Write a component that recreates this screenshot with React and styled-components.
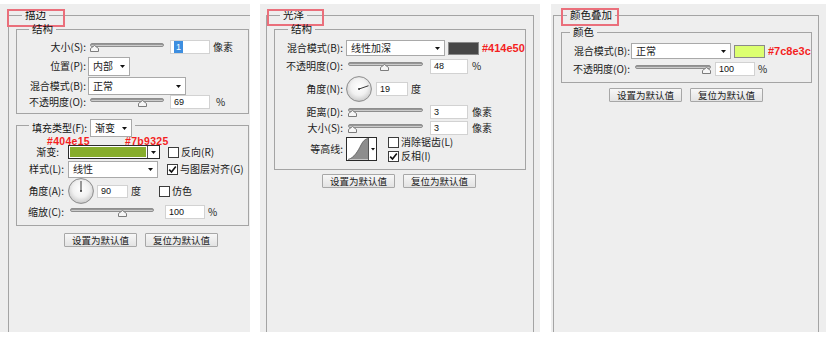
import React from "react";
import styled, { createGlobalStyle } from "styled-components";

const Global = createGlobalStyle`
  html, body { margin: 0; padding: 0; background: #ffffff; }
  body { font-family: "Noto Sans CJK SC", "Noto Sans", sans-serif; color: #1c1c1c; }
  * { box-sizing: border-box; }
`;

const Page = styled.div`
  display: flex;
  align-items: flex-start;
  width: 826px;
  height: 338px;
  padding-top: 4px;
  overflow: hidden;
`;

const Panel = styled.section`
  flex: none;
  display: flex;
  flex-direction: column;
  width: ${(p) => p.$w}px;
  height: 328px;
  margin-left: ${(p) => p.$ml}px;
  padding: 4px 0 0 ${(p) => p.$pl}px;
  background: #eeeeee;
  overflow: hidden;
`;

const Group = styled.fieldset`
  flex: 1;
  flex-shrink: 0;
  width: ${(p) => p.$w}px;
  min-width: 0;
  margin: 0;
  padding: 0;
  border: 1px solid #a4a4a4;
  border-bottom: none;
`;

const SubGroup = styled.fieldset`
  width: ${(p) => p.$w}px;
  min-width: 0;
  margin: ${(p) => p.$mt || 0}px 0 0 7px;
  padding: ${(p) => p.$pt}px 0 ${(p) => p.$pb}px 0;
  border: 1px solid #a4a4a4;
`;

const Legend = styled.legend`
  position: relative;
  display: flex;
  align-items: center;
  margin-left: ${(p) => p.$ml}px;
  padding: ${(p) => p.$pt || 0}px 3px 0;
  font-size: ${(p) => p.$fs || 10.5}px;
  line-height: 14px;
  color: #111;
  ${(p) =>
    p.$mark !== undefined &&
    `&::after {
      content: "";
      position: absolute;
      left: ${p.$mark}px;
      top: ${p.$markTop}px;
      width: ${p.$markW}px;
      height: ${p.$markH}px;
      border: 2px solid #ea6f7b;
    }`}
`;

const Row = styled.div`
  display: flex;
  align-items: center;
  height: ${(p) => p.$h}px;
  flex: none;
`;

const Label = styled.span`
  flex: none;
  width: ${(p) => p.$w}px;
  text-align: right;
  font-size: 10px;
  line-height: 12px;
  white-space: nowrap;
  color: #1a1a1a;
`;

const Unit = styled.span`
  flex: none;
  margin-left: ${(p) => p.$ml || 0}px;
  font-size: 10px;
  line-height: 12px;
  white-space: nowrap;
`;

const SliderBox = styled.div`
  position: relative;
  flex: none;
  width: ${(p) => p.$w}px;
  height: 10px;
  margin-left: ${(p) => p.$ml || 0}px;
`;

const Track = styled.div`
  position: absolute;
  left: 0;
  right: 0;
  top: 1px;
  height: 4px;
  border-radius: 2px;
  border: 1px solid #8e8e8e;
  background: linear-gradient(#7a7a7a, #b9b9b9 55%, #e4e4e4);
`;

const ThumbSvg = styled.svg`
  position: absolute;
  top: 3px;
  left: ${(p) => p.$x}px;
`;

const Slider = ({ $w, $ml, $pos }) => (
  <SliderBox $w={$w} $ml={$ml}>
    <Track />
    <ThumbSvg $x={$pos} width="9" height="7" viewBox="0 0 9 7">
      <polygon points="0.5,6.5 0.5,3.5 4.5,0.5 8.5,3.5 8.5,6.5" fill="#f6f6f6" stroke="#7c7c7c" />
    </ThumbSvg>
  </SliderBox>
);

const Field = styled.div`
  flex: none;
  display: flex;
  align-items: center;
  width: ${(p) => p.$w}px;
  height: ${(p) => p.$h || 14}px;
  margin-left: ${(p) => p.$ml || 0}px;
  padding-left: 3px;
  background: #ffffff;
  border: 1px solid #d2d2d2;
  font-family: "Liberation Sans", Arial, sans-serif;
  font-size: 9px;
  color: #111;
`;

const Sel = styled.span`
  display: inline-block;
  height: 12px;
  line-height: 12px;
  padding: 0 2px;
  background: #3d8ee0;
  color: #ffffff;
`;

const SelectBox = styled.div`
  flex: none;
  display: flex;
  align-items: center;
  justify-content: space-between;
  width: ${(p) => p.$w}px;
  height: ${(p) => p.$h}px;
  margin-left: ${(p) => p.$ml || 0}px;
  padding: 0 4px 0 4px;
  background: #ffffff;
  border: 1px solid #a9a9a9;
  font-size: 10px;
  line-height: 12px;
  white-space: nowrap;
`;

const Arrow = () => (
  <svg width="5" height="3" viewBox="0 0 5 3">
    <polygon points="0,0 5,0 2.5,3" fill="#111" />
  </svg>
);

const Select = ({ children, ...rest }) => (
  <SelectBox {...rest}>
    <span>{children}</span>
    <Arrow />
  </SelectBox>
);

const Swatch = styled.div`
  flex: none;
  width: 31px;
  height: 13px;
  margin-left: ${(p) => p.$ml || 0}px;
  background: ${(p) => p.$c};
  border: 1px solid #8a8a8a;
`;

const Note = styled.span`
  flex: none;
  margin-left: ${(p) => p.$ml || 0}px;
  width: ${(p) => (p.$w ? `${p.$w}px` : "auto")};
  font-family: "Liberation Sans", Arial, sans-serif;
  font-weight: 700;
  font-size: ${(p) => p.$fs || 11}px;
  letter-spacing: ${(p) => p.$ls || 0}px;
  line-height: ${(p) => p.$lh || 12}px;
  color: #f41f1f;
  white-space: nowrap;
`;

const GradientBox = styled.div`
  flex: none;
  display: flex;
  width: 92px;
  height: 14px;
  margin-left: ${(p) => p.$ml || 0}px;
  border: 1px solid #2b2b2b;
  background: #ffffff;
`;

const GradientFill = styled.div`
  flex: 1;
  margin: 1px;
  background: #87ad2c;
`;

const DropPart = styled.div`
  flex: none;
  display: flex;
  align-items: center;
  justify-content: center;
  width: 12px;
  border-left: 1px solid #555;
`;

const CheckItem = styled.span`
  flex: none;
  display: flex;
  align-items: center;
  gap: 2px;
  margin-left: ${(p) => p.$ml || 0}px;
  font-size: 10px;
  line-height: 12px;
  white-space: nowrap;
`;

const Box = styled.span`
  flex: none;
  display: flex;
  align-items: center;
  justify-content: center;
  width: 11px;
  height: 11px;
  background: #ffffff;
  border: 1px solid #3c3c3c;
`;

const Check = ({ on, children, ...rest }) => (
  <CheckItem {...rest}>
    <Box>
      {on && (
        <svg width="9" height="9" viewBox="0 0 9 9">
          <polyline points="1.2,4.6 3.5,7 7.8,1.5" fill="none" stroke="#111" strokeWidth="1.6" />
        </svg>
      )}
    </Box>
    {children}
  </CheckItem>
);

const CheckStack = styled.div`
  flex: none;
  display: flex;
  flex-direction: column;
  gap: 2px;
  margin-left: ${(p) => p.$ml || 0}px;
`;

const DialSvg = styled.svg`
  flex: none;
  margin-left: ${(p) => p.$ml || 0}px;
`;

const Dial = ({ angle, id, $ml }) => {
  const r = (angle * Math.PI) / 180;
  const x2 = 13 + Math.cos(r) * 10;
  const y2 = 13 - Math.sin(r) * 10;
  return (
    <DialSvg $ml={$ml} width="26" height="26" viewBox="0 0 26 26">
      <defs>
        <radialGradient id={id} cx="50%" cy="42%" r="60%">
          <stop offset="0%" stopColor="#ffffff" />
          <stop offset="55%" stopColor="#f1f1f1" />
          <stop offset="100%" stopColor="#c6c6c6" />
        </radialGradient>
      </defs>
      <circle cx="13" cy="13" r="12.4" fill={`url(#${id})`} stroke="#8c8c8c" strokeWidth="1" />
      <line x1="13" y1="13" x2={x2} y2={y2} stroke="#3a3a3a" strokeWidth="1" />
      <circle cx="13" cy="13" r="1" fill="#333" />
    </DialSvg>
  );
};

const ContourSvg = styled.svg`
  flex: none;
  margin-left: ${(p) => p.$ml || 0}px;
`;

const Contour = ({ $ml }) => (
  <ContourSvg $ml={$ml} width="31" height="24" viewBox="0 0 31 24">
    <rect x="0.5" y="0.5" width="30" height="23" fill="#ffffff" stroke="#2a2a2a" />
    <path d="M2,22.5 C8,21 12,14 15,8 C17,4 19,2 22,1.5 L22,22.5 Z" fill="#8d8d8d" />
    <path d="M2,22.5 C8,21 12,14 15,8 C17,4 19,2 22,1.5" fill="none" stroke="#5a5a5a" strokeWidth="0.8" />
    <line x1="22.5" y1="1" x2="22.5" y2="23" stroke="#555" />
    <polygon points="25,11 29,11 27,13.5" fill="#111" />
  </ContourSvg>
);

const Buttons = styled.div`
  display: flex;
  gap: 8px;
  margin: ${(p) => p.$mt}px 0 0 55px;
`;

const Button = styled.button`
  flex: none;
  width: 73px;
  height: 14px;
  padding: 0;
  border: 1px solid #a7a7a7;
  border-radius: 1px;
  background: linear-gradient(#f7f7f7, #e3e3e3);
  font-family: "Noto Sans CJK SC", sans-serif;
  font-size: 9.5px;
  line-height: 12px;
  color: #1a1a1a;
`;

const DefaultButtons = ({ $mt }) => (
  <Buttons $mt={$mt}>
    <Button>设置为默认值</Button>
    <Button>复位为默认值</Button>
  </Buttons>
);

export default function App() {
  return (
    <>
      <Global />
      <Page>
        <Panel $w={250} $ml={0} $pl={8}>
          <Group $w={250}>
            <Legend $ml={13} $mark={-15} $markTop={1} $markW={54} $markH={14}>描边</Legend>
            <SubGroup $w={233} $pt={2} $pb={5}>
              <Legend $ml={12}>结构</Legend>
              <Row $h={18}>
                <Label $w={69}>大小(S):</Label>
                <Slider $ml={4} $w={74} $pos={0} />
                <Field $ml={6} $w={40}><Sel>1</Sel></Field>
                <Unit $ml={3}>像素</Unit>
              </Row>
              <Row $h={20}>
                <Label $w={69}>位置(P):</Label>
                <Select $ml={2} $w={42} $h={19}>内部</Select>
              </Row>
              <Row $h={20}>
                <Label $w={69}>混合模式(B):</Label>
                <Select $ml={2} $w={98} $h={18}>正常</Select>
              </Row>
              <Row $h={12}>
                <Label $w={69}>不透明度(O):</Label>
                <Slider $ml={4} $w={74} $pos={48} />
                <Field $ml={6} $w={40}>69</Field>
                <Unit $ml={6}>%</Unit>
              </Row>
            </SubGroup>
            <SubGroup $w={233} $pt={1} $pb={5}>
              <Legend $ml={12} $pt={5} $fs={10}>
                填充类型(F):
                <Select $ml={3} $w={42} $h={18}>渐变</Select>
              </Legend>
              <Row $h={6}>
                <Note $ml={30} $w={78} $lh={6} $fs={10.5} $ls={0.3}>#404e15</Note>
                <Note $lh={6} $fs={10.5} $ls={0.3}>#7b9325</Note>
              </Row>
              <Row $h={16}>
                <Label $w={42}>渐变:</Label>
                <GradientBox $ml={9}>
                  <GradientFill />
                  <DropPart><Arrow /></DropPart>
                </GradientBox>
                <Check $ml={8}>反向(R)</Check>
              </Row>
              <Row $h={18}>
                <Label $w={47}>样式(L):</Label>
                <Select $ml={4} $w={90} $h={17}>线性</Select>
                <Check $ml={9} on>与图层对齐(G)</Check>
              </Row>
              <Row $h={26}>
                <Label $w={47}>角度(A):</Label>
                <Dial $ml={4} angle={90} id="dialA" />
                <Field $ml={3} $w={31} $h={13}>90</Field>
                <Unit $ml={3}>度</Unit>
                <Check $ml={18}>仿色</Check>
              </Row>
              <Row $h={16}>
                <Label $w={47}>缩放(C):</Label>
                <Slider $ml={6} $w={84} $pos={48} />
                <Field $ml={11} $w={40}>100</Field>
                <Unit $ml={3}>%</Unit>
              </Row>
            </SubGroup>
            <DefaultButtons $mt={7} />
          </Group>
        </Panel>

        <Panel $w={280} $ml={10} $pl={6}>
          <Group $w={268}>
            <Legend $ml={13} $mark={-13} $markTop={1} $markW={53} $markH={13}>光泽</Legend>
            <SubGroup $w={252} $pt={3} $pb={6}>
              <Legend $ml={13}>结构</Legend>
              <Row $h={18}>
                <Label $w={68}>混合模式(B):</Label>
                <Select $ml={3} $w={99} $h={16}>线性加深</Select>
                <Swatch $ml={3} $c="#474747" />
                <Note $ml={3}>#414e50</Note>
              </Row>
              <Row $h={18}>
                <Label $w={68}>不透明度(O):</Label>
                <Slider $ml={5} $w={75} $pos={32} />
                <Field $ml={7} $w={38} $h={15}>48</Field>
                <Unit $ml={4}>%</Unit>
              </Row>
              <Row $h={28}>
                <Label $w={68}>角度(N):</Label>
                <Dial $ml={3} angle={19} id="dialN" />
                <Field $ml={4} $w={32}>19</Field>
                <Unit $ml={3}>度</Unit>
              </Row>
              <Row $h={18}>
                <Label $w={68}>距离(D):</Label>
                <Slider $ml={5} $w={75} $pos={0} />
                <Field $ml={7} $w={38}>3</Field>
                <Unit $ml={4}>像素</Unit>
              </Row>
              <Row $h={14}>
                <Label $w={68}>大小(S):</Label>
                <Slider $ml={5} $w={75} $pos={0} />
                <Field $ml={7} $w={38}>3</Field>
                <Unit $ml={4}>像素</Unit>
              </Row>
              <Row $h={28}>
                <Label $w={68}>等高线:</Label>
                <Contour $ml={3} />
                <CheckStack $ml={11}>
                  <Check>消除锯齿(L)</Check>
                  <Check on>反相(I)</Check>
                </CheckStack>
              </Row>
            </SubGroup>
            <DefaultButtons $mt={4} />
          </Group>
        </Panel>

        <Panel $w={275} $ml={11} $pl={2}>
          <Group $w={266}>
            <Legend $ml={13} $mark={-6} $markTop={0} $markW={54} $markH={14}>颜色叠加</Legend>
            <SubGroup $w={251} $mt={3} $pt={3} $pb={4}>
              <Legend $ml={8}>颜色</Legend>
              <Row $h={18}>
                <Label $w={68}>混合模式(B):</Label>
                <Select $ml={1} $w={100} $h={16}>正常</Select>
                <Swatch $ml={3} $c="#dcff70" />
                <Note $ml={3}>#7c8e3c</Note>
              </Row>
              <Row $h={18}>
                <Label $w={68}>不透明度(O):</Label>
                <Slider $ml={5} $w={76} $pos={67} />
                <Field $ml={4} $w={40}>100</Field>
                <Unit $ml={3}>%</Unit>
              </Row>
            </SubGroup>
            <DefaultButtons $mt={5} />
          </Group>
        </Panel>
      </Page>
    </>
  );
}
